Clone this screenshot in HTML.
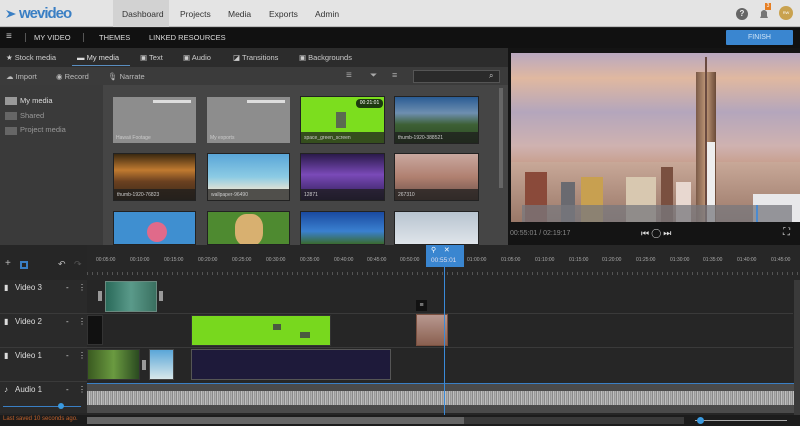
<!DOCTYPE html>
<html><head><meta charset="utf-8"><style>
*{margin:0;padding:0;box-sizing:border-box}
body{width:800px;height:426px;overflow:hidden;background:#262626;font-family:"Liberation Sans",sans-serif;position:relative}
.a{position:absolute}
.t{position:absolute;white-space:nowrap}
.th{position:absolute;border:1px solid #222;overflow:hidden}
.th span{position:absolute;left:0;right:0;bottom:0;height:11px;background:rgba(30,30,30,.75);color:#ccc;font-size:5px;padding:3px 3px}
.rl{position:absolute;top:257px;font-size:5px;color:#aaa}
.trk{position:absolute;left:0;width:87px;color:#ddd;font-size:8px}
.b{position:absolute;bottom:0}
</style></head><body>
<div class="a" style="left:0;top:0;width:800px;height:27px;background:#e4e4e4;border-bottom:1px solid #bbb"></div>
<div class="a" style="left:113px;top:0;width:56px;height:27px;background:#d2d2d2"></div>
<svg class="a" style="left:5px;top:8px" width="12" height="12"><path d="M1 2 L11 6 L1 10 L4 6Z" fill="#3a7fc4"/></svg>
<div class="t" style="left:19px;top:5px;font-size:15px;font-weight:bold;color:#3a7fc4;letter-spacing:-1px">wevideo</div>
<div class="t" style="left:122px;top:9px;font-size:8.5px;color:#333">Dashboard</div>
<div class="t" style="left:180px;top:9px;font-size:8.5px;color:#333">Projects</div>
<div class="t" style="left:228px;top:9px;font-size:8.5px;color:#333">Media</div>
<div class="t" style="left:269px;top:9px;font-size:8.5px;color:#333">Exports</div>
<div class="t" style="left:315px;top:9px;font-size:8.5px;color:#333">Admin</div>
<div class="a" style="left:736px;top:8px;width:12px;height:12px;border-radius:50%;background:#666;color:#eee;font-size:8px;text-align:center;line-height:12px;font-weight:bold">?</div>
<svg class="a" style="left:758px;top:7px" width="12" height="14"><path d="M2 11 L10 11 L9 9 L9 5 Q6 1 3 5 L3 9Z" fill="#777"/></svg>
<div class="a" style="left:765px;top:3px;width:6px;height:7px;background:#e67e22;font-size:5px;color:#fff;text-align:center">3</div>
<div class="a" style="left:779px;top:6px;width:14px;height:14px;border-radius:50%;background:#c9a24f;font-size:4px;color:#fff;text-align:center;line-height:14px">RW</div>
<div class="a" style="left:0;top:28px;width:800px;height:20px;background:#111"></div>
<div class="t" style="left:6px;top:31px;font-size:10px;color:#ccc">≡</div>
<div class="a" style="left:25px;top:33px;width:1px;height:9px;background:#555"></div>
<div class="t" style="left:34px;top:33px;font-size:7.5px;color:#ddd">MY VIDEO</div>
<div class="a" style="left:83px;top:33px;width:1px;height:9px;background:#555"></div>
<div class="t" style="left:99px;top:33px;font-size:7.5px;color:#ddd">THEMES</div>
<div class="t" style="left:149px;top:33px;font-size:7.5px;color:#ddd">LINKED RESOURCES</div>
<div class="a" style="left:726px;top:30px;width:67px;height:15px;background:#3a86d0;border-radius:1px;color:#cfe4f7;font-size:7px;text-align:center;line-height:15px">FINISH</div>
<div class="a" style="left:0;top:48px;width:510px;height:19px;background:#2c2c2c"></div>
<div class="t" style="left:6px;top:53px;font-size:7.5px;color:#ccc">★ Stock media</div>
<div class="t" style="left:77px;top:53px;font-size:7.5px;color:#ddd">▬ My media</div>
<div class="a" style="left:72px;top:65px;width:58px;height:1px;background:#5a8ec0"></div>
<div class="t" style="left:140px;top:53px;font-size:7.5px;color:#ccc">▣ Text</div>
<div class="t" style="left:183px;top:53px;font-size:7.5px;color:#ccc">▣ Audio</div>
<div class="t" style="left:233px;top:53px;font-size:7.5px;color:#ccc">◪ Transitions</div>
<div class="t" style="left:299px;top:53px;font-size:7.5px;color:#ccc">▣ Backgrounds</div>
<div class="a" style="left:0;top:67px;width:510px;height:18px;background:#3b3b3b"></div>
<div class="t" style="left:6px;top:72px;font-size:7.5px;color:#bbb">☁ Import</div>
<div class="t" style="left:56px;top:72px;font-size:7.5px;color:#bbb">◉ Record</div>
<div class="t" style="left:108px;top:72px;font-size:7.5px;color:#bbb">🎙 Narrate</div>
<div class="t" style="left:346px;top:70px;font-size:10px;color:#aaa">≡</div>
<div class="t" style="left:370px;top:70px;font-size:9px;color:#aaa">⏷</div>
<div class="t" style="left:392px;top:70px;font-size:9px;color:#aaa">≡</div>
<div class="a" style="left:413px;top:70px;width:87px;height:13px;background:#2a2a2a;border:1px solid #555"></div>
<div class="t" style="left:489px;top:71px;font-size:8px;color:#ccc">⌕</div>
<div class="a" style="left:0;top:85px;width:103px;height:160px;background:#3a3a3a"></div>
<div class="a" style="left:103px;top:85px;width:405px;height:160px;background:#454545"></div>
<div class="a" style="left:499px;top:88px;width:4px;height:100px;background:#666"></div>
<div class="a" style="left:5px;top:97px;width:12px;height:8px;background:#999"></div>
<div class="t" style="left:20px;top:96px;font-size:7.5px;color:#ddd">My media</div>
<div class="a" style="left:5px;top:112px;width:12px;height:8px;background:#666"></div>
<div class="t" style="left:20px;top:111px;font-size:7.5px;color:#999">Shared</div>
<div class="a" style="left:5px;top:127px;width:12px;height:8px;background:#666"></div>
<div class="t" style="left:20px;top:125px;font-size:7.5px;color:#999">Project media</div>
<div class="th" style="left:113px;top:97px;width:83px;height:46px;background:#8d8d8d;border:none"><div class="a" style="left:40px;top:3px;width:38px;height:3px;background:#ddd"></div><span style="background:none">Hawaii Footage</span></div>
<div class="th" style="left:207px;top:97px;width:83px;height:46px;background:#8d8d8d;border:none"><div class="a" style="left:40px;top:3px;width:38px;height:3px;background:#ddd"></div><span style="background:none">My exports</span></div>
<div class="th" style="left:300px;top:96px;width:85px;height:48px;background:#7cde1e"><div class="a" style="left:55px;top:2px;width:27px;height:9px;background:#1e3a10;border-radius:4px;color:#fff;font-size:5px;text-align:center;line-height:9px">00:21:01</div><div class="a" style="left:35px;top:15px;width:10px;height:16px;background:#5a6b50"></div><span>space_green_screen</span></div>
<div class="th" style="left:394px;top:96px;width:85px;height:48px;background:linear-gradient(#2a5c94 0%,#6e8fb0 35%,#3d6035 60%,#2b4a22)"><span>thumb-1920-388521</span></div>
<div class="th" style="left:113px;top:153px;width:83px;height:48px;background:linear-gradient(#3a2810,#c07a30 35%,#6a4020 60%,#3a2a18)"><span>thumb-1920-76823</span></div>
<div class="th" style="left:207px;top:153px;width:83px;height:48px;background:linear-gradient(#5aa6d8,#8ccbe4 50%,#e8e4d4 80%)"><span>wallpaper-96490</span></div>
<div class="th" style="left:300px;top:153px;width:85px;height:48px;background:linear-gradient(#2a1a4a,#7a4ab8 45%,#2a1a50)"><span>12871</span></div>
<div class="th" style="left:394px;top:153px;width:85px;height:48px;background:linear-gradient(#c9a8a0,#b08070 50%,#6a5048)"><span>267310</span></div>
<div class="th" style="left:113px;top:211px;width:83px;height:34px;background:#3f8fd0"><div class="a" style="left:33px;top:10px;width:20px;height:20px;border-radius:50%;background:#e06a8a"></div></div>
<div class="th" style="left:207px;top:211px;width:83px;height:34px;background:#4e8a30"><div class="a" style="left:27px;top:2px;width:28px;height:32px;border-radius:40%;background:#d8b070"></div></div>
<div class="th" style="left:300px;top:211px;width:85px;height:34px;background:linear-gradient(#1a4aa0,#3a80d0 60%,#3a6a30)"></div>
<div class="th" style="left:394px;top:211px;width:85px;height:34px;background:linear-gradient(#b8c4d0,#dfe4ea)"></div>
<!-- preview -->
<div class="a" style="left:508px;top:48px;width:292px;height:197px;background:#141414"></div>
<div class="a" style="left:511px;top:53px;width:289px;height:169px;overflow:hidden;background:linear-gradient(180deg,#b9a8c0 0%,#e0b8a0 15%,#b4a6bc 35%,#cfb2b0 55%,#c8a090 65%,#b08870 100%)">
<div class="b" style="left:0;width:289px;height:60px;background:linear-gradient(#c8a898,#9a7868)"></div>
<div class="b" style="left:14px;width:22px;height:50px;background:#8a4a3a"></div>
<div class="b" style="left:50px;width:14px;height:40px;background:#6a6a70"></div>
<div class="b" style="left:70px;width:22px;height:45px;background:#c8a050"></div>
<div class="b" style="left:115px;width:30px;height:45px;background:#d8c8b0"></div>
<div class="b" style="left:150px;width:12px;height:55px;background:#7a5040"></div>
<div class="b" style="left:165px;width:15px;height:40px;background:#e8d8d0"></div>
<div class="b" style="left:242px;width:47px;height:28px;background:#e8e8ea"></div>
<div class="b" style="left:185px;width:20px;height:150px;background:linear-gradient(90deg,#7a5a48,#c09878,#6a4a38)"></div>
<div class="b" style="left:194px;width:2px;height:165px;background:#6a4a40"></div>
<div class="b" style="left:196px;width:8px;height:80px;background:#eee"></div>
</div>
<div class="a" style="left:522px;top:205px;width:270px;height:17px;background:rgba(120,120,125,.75)"></div>
<div class="a" style="left:756px;top:205px;width:2px;height:17px;background:#4a8ad0"></div>
<div class="a" style="left:511px;top:222px;width:289px;height:23px;background:#141414"></div>
<div class="t" style="left:510px;top:230px;font-size:7px;color:#888">00:55:01 / 02:19:17</div>
<div class="t" style="left:641px;top:228px;font-size:9px;color:#ddd">⏮ ◯ ⏭</div>
<div class="t" style="left:783px;top:227px;font-size:10px;color:#ddd">⛶</div>
<!-- timeline -->
<div class="a" style="left:0;top:245px;width:800px;height:170px;background:#262626"></div>
<div class="a" style="left:87px;top:245px;width:713px;height:35px;background:#272727"></div>
<div class="a" style="left:87px;top:272px;width:713px;height:3px;background:repeating-linear-gradient(90deg,#555 0 1px,transparent 1px 5px)"></div>
<div class="t" style="left:5px;top:258px;font-size:10px;color:#bbb">+</div>
<div class="a" style="left:20px;top:261px;width:8px;height:8px;border:2px solid #3a7fc4"></div>
<div class="t" style="left:58px;top:259px;font-size:9px;color:#bbb">↶</div>
<div class="t" style="left:74px;top:259px;font-size:9px;color:#555">↷</div>
<div class="rl" style="left:96px">00:05:00</div><div class="rl" style="left:130px">00:10:00</div><div class="rl" style="left:164px">00:15:00</div><div class="rl" style="left:198px">00:20:00</div><div class="rl" style="left:232px">00:25:00</div><div class="rl" style="left:266px">00:30:00</div><div class="rl" style="left:300px">00:35:00</div><div class="rl" style="left:334px">00:40:00</div><div class="rl" style="left:367px">00:45:00</div><div class="rl" style="left:400px">00:50:00</div><div class="rl" style="left:467px">01:00:00</div><div class="rl" style="left:501px">01:05:00</div><div class="rl" style="left:535px">01:10:00</div><div class="rl" style="left:569px">01:15:00</div><div class="rl" style="left:602px">01:20:00</div><div class="rl" style="left:636px">01:25:00</div><div class="rl" style="left:670px">01:30:00</div><div class="rl" style="left:703px">01:35:00</div><div class="rl" style="left:737px">01:40:00</div><div class="rl" style="left:771px">01:45:00</div>
<div class="a" style="left:0;top:280px;width:87px;height:133px;background:#2a2a2a"></div>
<div class="a" style="left:87px;top:313px;width:706px;height:1px;background:#3a3a3a"></div>
<div class="a" style="left:87px;top:347px;width:706px;height:1px;background:#3a3a3a"></div>
<div class="a" style="left:0;top:313px;width:87px;height:1px;background:#3a3a3a"></div>
<div class="a" style="left:0;top:347px;width:87px;height:1px;background:#3a3a3a"></div>
<div class="a" style="left:0;top:381px;width:87px;height:1px;background:#3a3a3a"></div>
<div class="trk" style="top:283px"><span class="t" style="left:4px">▮</span><span class="t" style="left:15px">Video 3</span><span class="t" style="left:66px">-</span><span class="t" style="left:78px">⋮</span></div>
<div class="trk" style="top:317px"><span class="t" style="left:4px">▮</span><span class="t" style="left:15px">Video 2</span><span class="t" style="left:66px">-</span><span class="t" style="left:78px">⋮</span></div>
<div class="trk" style="top:351px"><span class="t" style="left:4px">▮</span><span class="t" style="left:15px">Video 1</span><span class="t" style="left:66px">-</span><span class="t" style="left:78px">⋮</span></div>
<div class="trk" style="top:385px"><span class="t" style="left:4px">♪</span><span class="t" style="left:15px">Audio 1</span><span class="t" style="left:66px">-</span><span class="t" style="left:78px">⋮</span></div>
<div class="a" style="left:3px;top:406px;width:78px;height:1px;background:#3a7fc4"></div>
<div class="a" style="left:58px;top:403px;width:6px;height:6px;border-radius:50%;background:#3a9ae0"></div>
<div class="a" style="left:794px;top:280px;width:6px;height:135px;background:#3a3a3a"></div>
<div class="a" style="left:98px;top:291px;width:4px;height:10px;background:#999"></div>
<div class="a" style="left:105px;top:281px;width:52px;height:31px;background:linear-gradient(90deg,#2a6a5a,#5a9a8a,#3a7060);border:1px solid #6a8a80"></div>
<div class="a" style="left:159px;top:291px;width:4px;height:10px;background:#999"></div>
<div class="a" style="left:87px;top:315px;width:16px;height:30px;background:#111;border:1px solid #333"></div>
<div class="a" style="left:191px;top:315px;width:140px;height:31px;background:#78d81e;border:1px solid #333"></div>
<div class="a" style="left:273px;top:324px;width:8px;height:6px;background:#4a5a40"></div>
<div class="a" style="left:300px;top:332px;width:10px;height:6px;background:#4a5a40"></div>
<div class="a" style="left:416px;top:300px;width:11px;height:11px;background:#111;color:#ccc;font-size:7px;text-align:center;line-height:11px">≡</div>
<div class="a" style="left:416px;top:314px;width:32px;height:32px;background:linear-gradient(#b89890,#8a6050);border:1px solid #7a5040"></div>
<div class="a" style="left:87px;top:349px;width:53px;height:31px;background:linear-gradient(90deg,#3a5a20,#6a9a40,#2a4a20);border:1px solid #333"></div>
<div class="a" style="left:142px;top:360px;width:4px;height:10px;background:#999"></div>
<div class="a" style="left:149px;top:349px;width:25px;height:31px;background:linear-gradient(#5aa6d8,#d8e8ea);border:1px solid #444"></div>
<div class="a" style="left:191px;top:349px;width:200px;height:31px;background:#1e1a3a;border:1px solid #555"></div>
<div class="a" style="left:87px;top:383px;width:707px;height:30px;background:#4a4a4a;border-top:1px solid #3a7fc4"></div>
<div class="a" style="left:87px;top:391px;width:707px;height:14px;background:repeating-linear-gradient(90deg,#b0b0b0 0 1px,#8a8a8a 1px 2px,#c0c0c0 2px 3px,#999 3px 4px)"></div>
<div class="a" style="left:444px;top:262px;width:1px;height:153px;background:#3a8ad8"></div>
<div class="a" style="left:426px;top:245px;width:38px;height:22px;background:#3a86d0"></div>
<div class="t" style="left:431px;top:246px;font-size:7px;color:#fff">⚲ &nbsp;&nbsp;&nbsp;✕</div>
<div class="t" style="left:431px;top:257px;font-size:6.5px;color:#dde">00:55:01</div>
<div class="a" style="left:0;top:415px;width:800px;height:11px;background:#1c1c1c"></div>
<div class="t" style="left:3px;top:416px;font-size:6px;color:#c0602a">Last saved 10 seconds ago.</div>
<div class="a" style="left:87px;top:417px;width:377px;height:7px;background:#666"></div>
<div class="a" style="left:464px;top:417px;width:220px;height:7px;background:#3a3a3a"></div>
<div class="a" style="left:695px;top:420px;width:92px;height:1px;background:#aaa"></div>
<div class="a" style="left:697px;top:417px;width:7px;height:7px;border-radius:50%;background:#3a9ae0"></div>
</body></html>
